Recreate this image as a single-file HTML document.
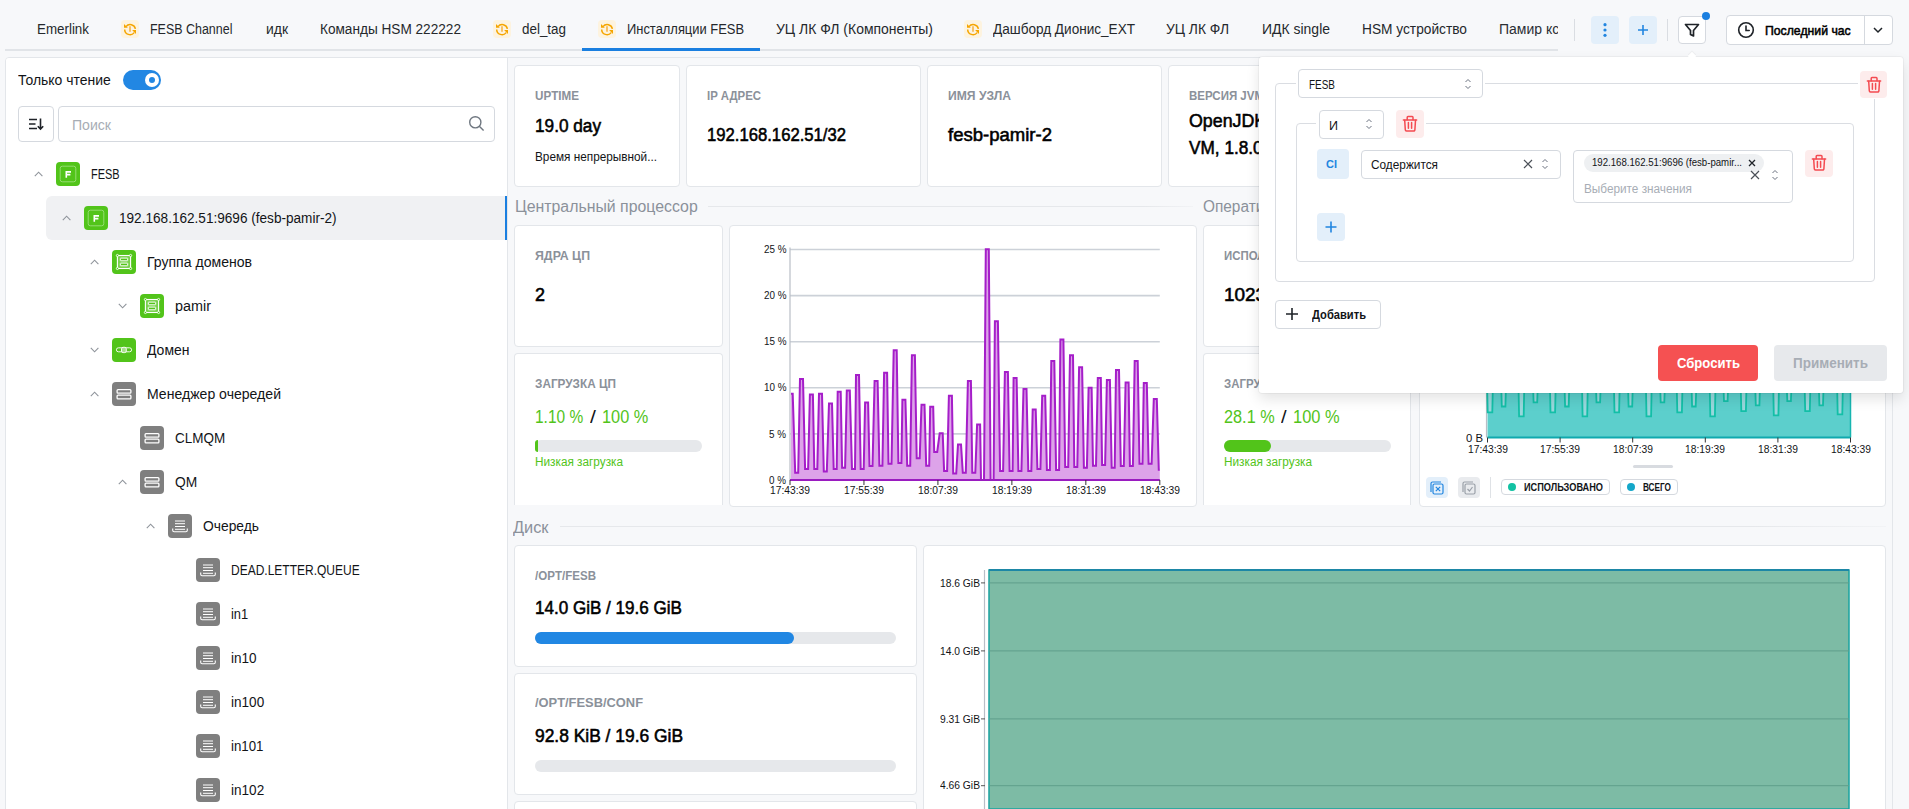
<!DOCTYPE html>
<html><head><meta charset="utf-8"><title>FESB</title>
<style>
html,body{margin:0;padding:0;}
body{width:1909px;height:809px;overflow:hidden;position:relative;background:#f7f8fa;font-family:'Liberation Sans', sans-serif;}
</style></head><body>
<div style="position:absolute;left:5px;top:49px;width:1553px;height:2px;background:#e1e4e8"></div>
<div style="position:absolute;left:582px;top:48px;width:178px;height:3px;background:#1a7fe0"></div>
<div style="position:absolute;left:37.0px;top:22.25px;font-size:14px;line-height:14px;font-weight:400;color:#25282c;white-space:nowrap;transform:scaleX(0.9547);transform-origin:0 0;">Emerlink</div>
<div style="position:absolute;left:150.0px;top:22.25px;font-size:14px;line-height:14px;font-weight:400;color:#25282c;white-space:nowrap;transform:scaleX(0.8898);transform-origin:0 0;">FESB Channel</div>
<div style="position:absolute;left:121px;top:20px;width:18px;height:18px;background:#fdf3df;border-radius:4px"></div>
<svg style="position:absolute;left:121px;top:20px" width="18" height="18" viewBox="0 0 18 18"><g fill="none" stroke="#f5a500" stroke-width="1.5"><path d="M5 6.6 A5.3 5.3 0 0 1 14.4 8.8"/><path d="M3.7 9.4 A5.3 5.3 0 0 0 13.2 12.6"/></g><path d="M3 3.9 L3 7.7 L6.8 7.7 Z" fill="#f5a500"/><path d="M15 14 L15 10.1 L11.1 10.1 Z" fill="#f5a500"/><path d="M9 6.3V11.8" stroke="#f7b13a" stroke-width="1.5"/></svg>
<div style="position:absolute;left:265.5px;top:22.25px;font-size:14px;line-height:14px;font-weight:400;color:#25282c;white-space:nowrap;transform:scaleX(0.9944);transform-origin:0 0;">идк</div>
<div style="position:absolute;left:320.0px;top:22.25px;font-size:14px;line-height:14px;font-weight:400;color:#25282c;white-space:nowrap;transform:scaleX(0.9729);transform-origin:0 0;">Команды HSM 222222</div>
<div style="position:absolute;left:522.0px;top:22.25px;font-size:14px;line-height:14px;font-weight:400;color:#25282c;white-space:nowrap;transform:scaleX(0.9578);transform-origin:0 0;">del_tag</div>
<div style="position:absolute;left:493px;top:20px;width:18px;height:18px;background:#fdf3df;border-radius:4px"></div>
<svg style="position:absolute;left:493px;top:20px" width="18" height="18" viewBox="0 0 18 18"><g fill="none" stroke="#f5a500" stroke-width="1.5"><path d="M5 6.6 A5.3 5.3 0 0 1 14.4 8.8"/><path d="M3.7 9.4 A5.3 5.3 0 0 0 13.2 12.6"/></g><path d="M3 3.9 L3 7.7 L6.8 7.7 Z" fill="#f5a500"/><path d="M15 14 L15 10.1 L11.1 10.1 Z" fill="#f5a500"/><path d="M9 6.3V11.8" stroke="#f7b13a" stroke-width="1.5"/></svg>
<div style="position:absolute;left:627.0px;top:22.25px;font-size:14px;line-height:14px;font-weight:400;color:#25282c;white-space:nowrap;transform:scaleX(0.9222);transform-origin:0 0;">Инсталляции FESB</div>
<div style="position:absolute;left:598px;top:20px;width:18px;height:18px;background:#fdf3df;border-radius:4px"></div>
<svg style="position:absolute;left:598px;top:20px" width="18" height="18" viewBox="0 0 18 18"><g fill="none" stroke="#f5a500" stroke-width="1.5"><path d="M5 6.6 A5.3 5.3 0 0 1 14.4 8.8"/><path d="M3.7 9.4 A5.3 5.3 0 0 0 13.2 12.6"/></g><path d="M3 3.9 L3 7.7 L6.8 7.7 Z" fill="#f5a500"/><path d="M15 14 L15 10.1 L11.1 10.1 Z" fill="#f5a500"/><path d="M9 6.3V11.8" stroke="#f7b13a" stroke-width="1.5"/></svg>
<div style="position:absolute;left:776.0px;top:22.25px;font-size:14px;line-height:14px;font-weight:400;color:#25282c;white-space:nowrap;transform:scaleX(0.9961);transform-origin:0 0;">УЦ ЛК ФЛ (Компоненты)</div>
<div style="position:absolute;left:993.0px;top:22.25px;font-size:14px;line-height:14px;font-weight:400;color:#25282c;white-space:nowrap;transform:scaleX(0.9694);transform-origin:0 0;">Дашборд Дионис_EXT</div>
<div style="position:absolute;left:964px;top:20px;width:18px;height:18px;background:#fdf3df;border-radius:4px"></div>
<svg style="position:absolute;left:964px;top:20px" width="18" height="18" viewBox="0 0 18 18"><g fill="none" stroke="#f5a500" stroke-width="1.5"><path d="M5 6.6 A5.3 5.3 0 0 1 14.4 8.8"/><path d="M3.7 9.4 A5.3 5.3 0 0 0 13.2 12.6"/></g><path d="M3 3.9 L3 7.7 L6.8 7.7 Z" fill="#f5a500"/><path d="M15 14 L15 10.1 L11.1 10.1 Z" fill="#f5a500"/><path d="M9 6.3V11.8" stroke="#f7b13a" stroke-width="1.5"/></svg>
<div style="position:absolute;left:1166.0px;top:22.25px;font-size:14px;line-height:14px;font-weight:400;color:#25282c;white-space:nowrap;transform:scaleX(0.9882);transform-origin:0 0;">УЦ ЛК ФЛ</div>
<div style="position:absolute;left:1262.0px;top:22.25px;font-size:14px;line-height:14px;font-weight:400;color:#25282c;white-space:nowrap;transform:scaleX(0.9975);transform-origin:0 0;">ИДК single</div>
<div style="position:absolute;left:1362.0px;top:22.25px;font-size:14px;line-height:14px;font-weight:400;color:#25282c;white-space:nowrap;transform:scaleX(0.9800);transform-origin:0 0;">HSM устройство</div>
<div style="position:absolute;left:1499.0px;top:22.25px;font-size:14px;line-height:14px;font-weight:400;color:#2b2f35;white-space:nowrap;width:59px;overflow:hidden;">Памир кс</div>
<div style="position:absolute;left:1574px;top:19px;width:1px;height:22px;background:#dadde2"></div>
<div style="position:absolute;left:1667px;top:19px;width:1px;height:22px;background:#dadde2"></div>
<div style="position:absolute;left:1591px;top:16px;width:28px;height:28px;background:#e3effa;border-radius:4px"></div>
<svg style="position:absolute;left:1591px;top:16px" width="28" height="28"><g fill="#2185e0"><circle cx="14" cy="8.65" r="1.6"/><circle cx="14" cy="14" r="1.6"/><circle cx="14" cy="19.35" r="1.6"/></g></svg>
<div style="position:absolute;left:1629px;top:16px;width:28px;height:28px;background:#e3effa;border-radius:4px"></div>
<svg style="position:absolute;left:1629px;top:16px" width="28" height="28"><g stroke="#2185e0" stroke-width="1.6"><path d="M14 9V19M9 14H19"/></g></svg>
<div style="position:absolute;left:1678px;top:16px;width:28px;height:28px;box-sizing:border-box;background:#fff;border:1px solid #d5d9df;border-radius:4px"></div>
<svg style="position:absolute;left:1678px;top:16px" width="28" height="28"><path d="M7.5 8.5H20.5L15.5 14.5V20L12.5 18.5V14.5Z" fill="none" stroke="#1f2328" stroke-width="1.7" stroke-linejoin="round"/></svg>
<div style="position:absolute;left:1701.9px;top:11.9px;width:8.2px;height:8.2px;border-radius:50%;background:#1a7fe0"></div>
<div style="position:absolute;left:1726px;top:15px;width:167px;height:30px;box-sizing:border-box;background:#fff;border:1px solid #d5d9df;border-radius:4px"></div>
<div style="position:absolute;left:1864px;top:16px;width:1px;height:28px;background:#d5d9df"></div>
<svg style="position:absolute;left:1736px;top:20px" width="20" height="20"><circle cx="10" cy="10" r="7.3" fill="none" stroke="#1f2328" stroke-width="1.6"/><path d="M10 6V10.5H13.2" fill="none" stroke="#1f2328" stroke-width="1.6" stroke-linecap="round"/></svg>
<div style="position:absolute;left:1764.6px;top:23.77px;font-size:13.5px;line-height:13.5px;font-weight:400;-webkit-text-stroke:0.55px #000;color:#000;white-space:nowrap;transform:scaleX(0.9067);transform-origin:0 0;">Последний час</div>
<svg style="position:absolute;left:1870px;top:22px" width="16" height="16"><path d="M4 6L8 10L12 6" fill="none" stroke="#1f2328" stroke-width="1.5"/></svg>
<div style="position:absolute;left:5px;top:57px;width:1888px;height:760px;box-sizing:border-box;background:#f7f8fa;border:1px solid #e3e6ea;border-radius:4px 4px 0 0"></div>
<div style="position:absolute;left:6px;top:58px;width:501px;height:760px;background:#fff;border-radius:3px 0 0 0"></div>
<div style="position:absolute;left:507px;top:58px;width:1px;height:760px;background:#e3e6ea"></div>
<div style="position:absolute;left:18.3px;top:73.15px;font-size:14px;line-height:14px;font-weight:400;color:#121417;white-space:nowrap;transform:scaleX(0.9964);transform-origin:0 0;">Только чтение</div>
<div style="position:absolute;left:123px;top:70px;width:38px;height:20px;background:#2287e3;border-radius:10px"></div>
<div style="position:absolute;left:145px;top:72.7px;width:14px;height:14px;border-radius:50%;background:#fff"></div>
<div style="position:absolute;left:149px;top:76.7px;width:6px;height:6px;border-radius:50%;background:#2287e3"></div>
<div style="position:absolute;left:18px;top:106px;width:36px;height:36px;box-sizing:border-box;border:1px solid #d5d9df;border-radius:4px;background:#fff"></div>
<svg style="position:absolute;left:18px;top:106px" width="36" height="36"><g stroke="#1f2328" stroke-width="1.6" fill="none"><path d="M11 13.5H19M11 18H17.5M11 22.5H19"/><path d="M22.5 12.5V23M19.8 20.2L22.5 23L25.2 20.2"/></g></svg>
<div style="position:absolute;left:58px;top:106px;width:437px;height:36px;box-sizing:border-box;border:1px solid #d5d9df;border-radius:4px;background:#fff"></div>
<div style="position:absolute;left:72.0px;top:117.95px;font-size:14px;line-height:14px;font-weight:400;color:#a7adb5;white-space:nowrap;transform:scaleX(1.0052);transform-origin:0 0;">Поиск</div>
<svg style="position:absolute;left:466px;top:114px" width="20" height="20"><circle cx="9.3" cy="8.3" r="5.6" fill="none" stroke="#6f7780" stroke-width="1.4"/><path d="M13.3 12.3L17.6 16.6" stroke="#6f7780" stroke-width="1.4"/></svg>
<div style="position:absolute;left:46px;top:196px;width:459px;height:44px;background:#f0f1f3;border-radius:6px 0 0 6px"></div>
<div style="position:absolute;left:505px;top:196px;width:2px;height:44px;background:#1a7fe0"></div>
<svg style="position:absolute;left:34px;top:171px" width="10" height="6"><path d="M0.8 5.2L4.6 1.2L8.4 5.2" fill="none" stroke="#8f949b" stroke-width="1.1"/></svg>
<div style="position:absolute;left:56px;top:162px;width:24px;height:24px;background:#52c41a;border-radius:4px"></div><svg style="position:absolute;left:56px;top:162px" width="24" height="24"><rect x="4.2" y="4.2" width="15.6" height="15.6" rx="2.2" fill="none" stroke="#a5e287" stroke-width="0.8"/><path d="M10.3 9.1V15.8M9.5 9.9H15M9.5 12.6H14.4" stroke="#fff" stroke-width="1.6" fill="none"/></svg>
<div style="position:absolute;left:90.5px;top:167.15px;font-size:14px;line-height:14px;font-weight:400;color:#121417;white-space:nowrap;transform:scaleX(0.7819);transform-origin:0 0;">FESB</div>
<svg style="position:absolute;left:62px;top:215px" width="10" height="6"><path d="M0.8 5.2L4.6 1.2L8.4 5.2" fill="none" stroke="#8f949b" stroke-width="1.1"/></svg>
<div style="position:absolute;left:84px;top:206px;width:24px;height:24px;background:#52c41a;border-radius:4px"></div><svg style="position:absolute;left:84px;top:206px" width="24" height="24"><rect x="4.2" y="4.2" width="15.6" height="15.6" rx="2.2" fill="none" stroke="#a5e287" stroke-width="0.8"/><path d="M10.3 9.1V15.8M9.5 9.9H15M9.5 12.6H14.4" stroke="#fff" stroke-width="1.6" fill="none"/></svg>
<div style="position:absolute;left:118.5px;top:211.15px;font-size:14px;line-height:14px;font-weight:400;color:#121417;white-space:nowrap;transform:scaleX(0.9708);transform-origin:0 0;">192.168.162.51:9696 (fesb-pamir-2)</div>
<svg style="position:absolute;left:90px;top:259px" width="10" height="6"><path d="M0.8 5.2L4.6 1.2L8.4 5.2" fill="none" stroke="#8f949b" stroke-width="1.1"/></svg>
<div style="position:absolute;left:112px;top:250px;width:24px;height:24px;background:#52c41a;border-radius:4px"></div><svg style="position:absolute;left:112px;top:250px" width="24" height="24"><rect x="5.4" y="5.5" width="13.2" height="13" fill="rgba(255,255,255,0.22)" stroke="#fff" stroke-width="1.1"/><rect x="8.3" y="8.1" width="7.4" height="2.7" rx="0.4" fill="#52c41a" stroke="#fff" stroke-width="1"/><rect x="8.3" y="13.1" width="7.4" height="2.7" rx="0.4" fill="#52c41a" stroke="#fff" stroke-width="1"/><g fill="#52c41a" stroke="#fff" stroke-width="0.8"><circle cx="5.4" cy="5.5" r="1.1"/><circle cx="18.6" cy="5.5" r="1.1"/><circle cx="5.4" cy="18.5" r="1.1"/><circle cx="18.6" cy="18.5" r="1.1"/></g></svg>
<div style="position:absolute;left:146.5px;top:255.15px;font-size:14px;line-height:14px;font-weight:400;color:#121417;white-space:nowrap;transform:scaleX(1.0039);transform-origin:0 0;">Группа доменов</div>
<svg style="position:absolute;left:118px;top:303px" width="10" height="6"><path d="M0.8 0.8L4.6 4.8L8.4 0.8" fill="none" stroke="#8f949b" stroke-width="1.1"/></svg>
<div style="position:absolute;left:140px;top:294px;width:24px;height:24px;background:#52c41a;border-radius:4px"></div><svg style="position:absolute;left:140px;top:294px" width="24" height="24"><rect x="5.4" y="5.5" width="13.2" height="13" fill="rgba(255,255,255,0.22)" stroke="#fff" stroke-width="1.1"/><rect x="8.3" y="8.1" width="7.4" height="2.7" rx="0.4" fill="#52c41a" stroke="#fff" stroke-width="1"/><rect x="8.3" y="13.1" width="7.4" height="2.7" rx="0.4" fill="#52c41a" stroke="#fff" stroke-width="1"/><g fill="#52c41a" stroke="#fff" stroke-width="0.8"><circle cx="5.4" cy="5.5" r="1.1"/><circle cx="18.6" cy="5.5" r="1.1"/><circle cx="5.4" cy="18.5" r="1.1"/><circle cx="18.6" cy="18.5" r="1.1"/></g></svg>
<div style="position:absolute;left:174.5px;top:299.15px;font-size:14px;line-height:14px;font-weight:400;color:#121417;white-space:nowrap;transform:scaleX(1.0281);transform-origin:0 0;">pamir</div>
<svg style="position:absolute;left:90px;top:347px" width="10" height="6"><path d="M0.8 0.8L4.6 4.8L8.4 0.8" fill="none" stroke="#8f949b" stroke-width="1.1"/></svg>
<div style="position:absolute;left:112px;top:338px;width:24px;height:24px;background:#52c41a;border-radius:4px"></div><svg style="position:absolute;left:112px;top:338px" width="24" height="24"><g fill="none" stroke="#fff" stroke-width="0.9"><rect x="4.4" y="9.8" width="15.2" height="4" rx="2"/></g><rect x="9.5" y="9.3" width="4.8" height="5.3" rx="1.6" fill="#a9e08c" stroke="#fff" stroke-width="0.9"/></svg>
<div style="position:absolute;left:146.5px;top:343.15px;font-size:14px;line-height:14px;font-weight:400;color:#121417;white-space:nowrap;transform:scaleX(0.9982);transform-origin:0 0;">Домен</div>
<svg style="position:absolute;left:90px;top:391px" width="10" height="6"><path d="M0.8 5.2L4.6 1.2L8.4 5.2" fill="none" stroke="#8f949b" stroke-width="1.1"/></svg>
<div style="position:absolute;left:112px;top:382px;width:24px;height:24px;background:#7f7f7f;border-radius:4px"></div><svg style="position:absolute;left:112px;top:382px" width="24" height="24"><g fill="none" stroke="#fff" stroke-width="1.3"><rect x="5.1" y="7.6" width="13.8" height="3.6" rx="0.9"/><rect x="5.1" y="13.2" width="13.8" height="3.6" rx="0.9"/></g><path d="M6 12.2H18" stroke="#c4c4c4" stroke-width="0.9"/></svg>
<div style="position:absolute;left:146.5px;top:387.15px;font-size:14px;line-height:14px;font-weight:400;color:#121417;white-space:nowrap;transform:scaleX(1.0043);transform-origin:0 0;">Менеджер очередей</div>
<div style="position:absolute;left:140px;top:426px;width:24px;height:24px;background:#7f7f7f;border-radius:4px"></div><svg style="position:absolute;left:140px;top:426px" width="24" height="24"><g fill="none" stroke="#fff" stroke-width="1.3"><rect x="5.1" y="7.6" width="13.8" height="3.6" rx="0.9"/><rect x="5.1" y="13.2" width="13.8" height="3.6" rx="0.9"/></g><path d="M6 12.2H18" stroke="#c4c4c4" stroke-width="0.9"/></svg>
<div style="position:absolute;left:174.5px;top:431.15px;font-size:14px;line-height:14px;font-weight:400;color:#121417;white-space:nowrap;transform:scaleX(0.9631);transform-origin:0 0;">CLMQM</div>
<svg style="position:absolute;left:118px;top:479px" width="10" height="6"><path d="M0.8 5.2L4.6 1.2L8.4 5.2" fill="none" stroke="#8f949b" stroke-width="1.1"/></svg>
<div style="position:absolute;left:140px;top:470px;width:24px;height:24px;background:#7f7f7f;border-radius:4px"></div><svg style="position:absolute;left:140px;top:470px" width="24" height="24"><g fill="none" stroke="#fff" stroke-width="1.3"><rect x="5.1" y="7.6" width="13.8" height="3.6" rx="0.9"/><rect x="5.1" y="13.2" width="13.8" height="3.6" rx="0.9"/></g><path d="M6 12.2H18" stroke="#c4c4c4" stroke-width="0.9"/></svg>
<div style="position:absolute;left:174.5px;top:475.15px;font-size:14px;line-height:14px;font-weight:400;color:#121417;white-space:nowrap;transform:scaleX(0.9839);transform-origin:0 0;">QM</div>
<svg style="position:absolute;left:146px;top:523px" width="10" height="6"><path d="M0.8 5.2L4.6 1.2L8.4 5.2" fill="none" stroke="#8f949b" stroke-width="1.1"/></svg>
<div style="position:absolute;left:168px;top:514px;width:24px;height:24px;background:#7f7f7f;border-radius:4px"></div><svg style="position:absolute;left:168px;top:514px" width="24" height="24"><g fill="none" stroke="#fff" stroke-width="1"><path d="M7 7H17M7 9.7H17M7 12.5H17M7 15.3H17" /><path d="M4.7 14.6V16.3A1.4 1.4 0 0 0 6.1 17.7H17.9A1.4 1.4 0 0 0 19.3 16.3V14.6" stroke-width="1.1"/></g></svg>
<div style="position:absolute;left:202.5px;top:519.15px;font-size:14px;line-height:14px;font-weight:400;color:#121417;white-space:nowrap;transform:scaleX(0.9876);transform-origin:0 0;">Очередь</div>
<div style="position:absolute;left:196px;top:558px;width:24px;height:24px;background:#7f7f7f;border-radius:4px"></div><svg style="position:absolute;left:196px;top:558px" width="24" height="24"><g fill="none" stroke="#fff" stroke-width="1"><path d="M7 7H17M7 9.7H17M7 12.5H17M7 15.3H17" /><path d="M4.7 14.6V16.3A1.4 1.4 0 0 0 6.1 17.7H17.9A1.4 1.4 0 0 0 19.3 16.3V14.6" stroke-width="1.1"/></g></svg>
<div style="position:absolute;left:230.5px;top:563.15px;font-size:14px;line-height:14px;font-weight:400;color:#121417;white-space:nowrap;transform:scaleX(0.8572);transform-origin:0 0;">DEAD.LETTER.QUEUE</div>
<div style="position:absolute;left:196px;top:602px;width:24px;height:24px;background:#7f7f7f;border-radius:4px"></div><svg style="position:absolute;left:196px;top:602px" width="24" height="24"><g fill="none" stroke="#fff" stroke-width="1"><path d="M7 7H17M7 9.7H17M7 12.5H17M7 15.3H17" /><path d="M4.7 14.6V16.3A1.4 1.4 0 0 0 6.1 17.7H17.9A1.4 1.4 0 0 0 19.3 16.3V14.6" stroke-width="1.1"/></g></svg>
<div style="position:absolute;left:230.5px;top:607.15px;font-size:14px;line-height:14px;font-weight:400;color:#121417;white-space:nowrap;transform:scaleX(0.9204);transform-origin:0 0;">in1</div>
<div style="position:absolute;left:196px;top:646px;width:24px;height:24px;background:#7f7f7f;border-radius:4px"></div><svg style="position:absolute;left:196px;top:646px" width="24" height="24"><g fill="none" stroke="#fff" stroke-width="1"><path d="M7 7H17M7 9.7H17M7 12.5H17M7 15.3H17" /><path d="M4.7 14.6V16.3A1.4 1.4 0 0 0 6.1 17.7H17.9A1.4 1.4 0 0 0 19.3 16.3V14.6" stroke-width="1.1"/></g></svg>
<div style="position:absolute;left:230.5px;top:651.15px;font-size:14px;line-height:14px;font-weight:400;color:#121417;white-space:nowrap;transform:scaleX(0.9672);transform-origin:0 0;">in10</div>
<div style="position:absolute;left:196px;top:690px;width:24px;height:24px;background:#7f7f7f;border-radius:4px"></div><svg style="position:absolute;left:196px;top:690px" width="24" height="24"><g fill="none" stroke="#fff" stroke-width="1"><path d="M7 7H17M7 9.7H17M7 12.5H17M7 15.3H17" /><path d="M4.7 14.6V16.3A1.4 1.4 0 0 0 6.1 17.7H17.9A1.4 1.4 0 0 0 19.3 16.3V14.6" stroke-width="1.1"/></g></svg>
<div style="position:absolute;left:230.5px;top:695.15px;font-size:14px;line-height:14px;font-weight:400;color:#121417;white-space:nowrap;transform:scaleX(0.9689);transform-origin:0 0;">in100</div>
<div style="position:absolute;left:196px;top:734px;width:24px;height:24px;background:#7f7f7f;border-radius:4px"></div><svg style="position:absolute;left:196px;top:734px" width="24" height="24"><g fill="none" stroke="#fff" stroke-width="1"><path d="M7 7H17M7 9.7H17M7 12.5H17M7 15.3H17" /><path d="M4.7 14.6V16.3A1.4 1.4 0 0 0 6.1 17.7H17.9A1.4 1.4 0 0 0 19.3 16.3V14.6" stroke-width="1.1"/></g></svg>
<div style="position:absolute;left:230.5px;top:739.15px;font-size:14px;line-height:14px;font-weight:400;color:#121417;white-space:nowrap;transform:scaleX(0.9485);transform-origin:0 0;">in101</div>
<div style="position:absolute;left:196px;top:778px;width:24px;height:24px;background:#7f7f7f;border-radius:4px"></div><svg style="position:absolute;left:196px;top:778px" width="24" height="24"><g fill="none" stroke="#fff" stroke-width="1"><path d="M7 7H17M7 9.7H17M7 12.5H17M7 15.3H17" /><path d="M4.7 14.6V16.3A1.4 1.4 0 0 0 6.1 17.7H17.9A1.4 1.4 0 0 0 19.3 16.3V14.6" stroke-width="1.1"/></g></svg>
<div style="position:absolute;left:230.5px;top:783.15px;font-size:14px;line-height:14px;font-weight:400;color:#121417;white-space:nowrap;transform:scaleX(0.9689);transform-origin:0 0;">in102</div>
<div style="position:absolute;left:514px;top:65px;width:166px;height:122px;box-sizing:border-box;background:#fff;border:1px solid #e3e6ea;border-radius:4px;"></div>
<div style="position:absolute;left:535.0px;top:90.04px;font-size:12px;line-height:12px;font-weight:700;color:#8b919a;white-space:nowrap;transform:scaleX(0.9704);transform-origin:0 0;">UPTIME</div>
<div style="position:absolute;left:535.0px;top:116.66px;font-size:18px;line-height:18px;font-weight:400;-webkit-text-stroke:0.55px #000;color:#000;white-space:nowrap;transform:scaleX(0.9557);transform-origin:0 0;">19.0 day</div>
<div style="position:absolute;left:535.0px;top:151.14px;font-size:12px;line-height:12px;font-weight:400;color:#121417;white-space:nowrap;transform:scaleX(0.9818);transform-origin:0 0;">Время непрерывной...</div>
<div style="position:absolute;left:686px;top:65px;width:235px;height:122px;box-sizing:border-box;background:#fff;border:1px solid #e3e6ea;border-radius:4px;"></div>
<div style="position:absolute;left:707.0px;top:90.04px;font-size:12px;line-height:12px;font-weight:700;color:#8b919a;white-space:nowrap;transform:scaleX(0.9508);transform-origin:0 0;">IP АДРЕС</div>
<div style="position:absolute;left:707.0px;top:125.56px;font-size:18px;line-height:18px;font-weight:400;-webkit-text-stroke:0.55px #000;color:#000;white-space:nowrap;transform:scaleX(0.9257);transform-origin:0 0;">192.168.162.51/32</div>
<div style="position:absolute;left:927px;top:65px;width:235px;height:122px;box-sizing:border-box;background:#fff;border:1px solid #e3e6ea;border-radius:4px;"></div>
<div style="position:absolute;left:948.0px;top:90.04px;font-size:12px;line-height:12px;font-weight:700;color:#8b919a;white-space:nowrap;transform:scaleX(1.0103);transform-origin:0 0;">ИМЯ УЗЛА</div>
<div style="position:absolute;left:948.0px;top:125.56px;font-size:18px;line-height:18px;font-weight:400;-webkit-text-stroke:0.55px #000;color:#000;white-space:nowrap;transform:scaleX(1.0294);transform-origin:0 0;">fesb-pamir-2</div>
<div style="position:absolute;left:1168px;top:65px;width:235px;height:122px;box-sizing:border-box;background:#fff;border:1px solid #e3e6ea;border-radius:4px;"></div>
<div style="position:absolute;left:1189.4px;top:90.04px;font-size:12px;line-height:12px;font-weight:700;color:#8b919a;white-space:nowrap;transform:scaleX(0.9577);transform-origin:0 0;">ВЕРСИЯ JVM</div>
<div style="position:absolute;left:1189.4px;top:111.56px;font-size:18px;line-height:18px;font-weight:400;-webkit-text-stroke:0.55px #000;color:#000;white-space:nowrap;transform:scaleX(0.9890);transform-origin:0 0;">OpenJDK 64-Bit Server</div>
<div style="position:absolute;left:1189.4px;top:139.26px;font-size:18px;line-height:18px;font-weight:400;-webkit-text-stroke:0.55px #000;color:#000;white-space:nowrap;transform:scaleX(0.9565);transform-origin:0 0;">VM, 1.8.0_282</div>
<div style="position:absolute;left:514.6px;top:199.16px;font-size:16px;line-height:16px;font-weight:400;color:#8b919a;white-space:nowrap;transform:scaleX(0.9907);transform-origin:0 0;">Центральный процессор</div>
<div style="position:absolute;left:708px;top:206px;width:485px;height:1px;background:linear-gradient(90deg,#e6e8eb,#e6e8eb 90%,rgba(230,232,235,0.3))"></div>
<div style="position:absolute;left:1203.3px;top:199.16px;font-size:16px;line-height:16px;font-weight:400;color:#8b919a;white-space:nowrap;transform:scaleX(0.9618);transform-origin:0 0;">Оперативная память</div>
<div style="position:absolute;left:1365px;top:206px;width:521px;height:1px;background:linear-gradient(90deg,#e6e8eb,#e6e8eb 90%,rgba(230,232,235,0.3))"></div>
<div style="position:absolute;left:513.4px;top:519.66px;font-size:16px;line-height:16px;font-weight:400;color:#8b919a;white-space:nowrap;transform:scaleX(1.0207);transform-origin:0 0;">Диск</div>
<div style="position:absolute;left:560px;top:526px;width:1326px;height:1px;background:linear-gradient(90deg,#e6e8eb,#e6e8eb 90%,rgba(230,232,235,0.3))"></div>
<div style="position:absolute;left:514px;top:225px;width:209px;height:122px;box-sizing:border-box;background:#fff;border:1px solid #e3e6ea;border-radius:4px;"></div>
<div style="position:absolute;left:535.0px;top:249.84px;font-size:12px;line-height:12px;font-weight:700;color:#8b919a;white-space:nowrap;transform:scaleX(1.0277);transform-origin:0 0;">ЯДРА ЦП</div>
<div style="position:absolute;left:535.0px;top:285.56px;font-size:18px;line-height:18px;font-weight:400;-webkit-text-stroke:0.55px #000;color:#000;white-space:nowrap;transform:scaleX(0.9984);transform-origin:0 0;">2</div>
<div style="position:absolute;left:514px;top:353px;width:209px;height:152px;box-sizing:border-box;background:#fff;border:1px solid #e3e6ea;border-radius:4px;border-bottom:none;border-radius:4px 4px 0 0"></div>
<div style="position:absolute;left:535.0px;top:377.84px;font-size:12px;line-height:12px;font-weight:700;color:#8b919a;white-space:nowrap;transform:scaleX(0.9814);transform-origin:0 0;">ЗАГРУЗКА ЦП</div>
<div style="position:absolute;left:534.8px;top:407.96px;font-size:18px;line-height:18px;font-weight:400;color:#52c41a;white-space:nowrap;transform:scaleX(0.8600);transform-origin:0 0;">1.10 %</div>
<div style="position:absolute;left:589.8px;top:407.96px;font-size:18px;line-height:18px;font-weight:400;color:#121417;white-space:nowrap;transform:scaleX(1.1763);transform-origin:0 0;">/</div>
<div style="position:absolute;left:602.0px;top:407.96px;font-size:18px;line-height:18px;font-weight:400;color:#52c41a;white-space:nowrap;transform:scaleX(0.9070);transform-origin:0 0;">100 %</div>
<div style="position:absolute;left:535px;top:440px;width:167px;height:11.5px;background:#e6e8eb;border-radius:6px"></div>
<div style="position:absolute;left:535px;top:440px;width:3px;height:11.5px;background:#52c41a;border-radius:6px 0 0 6px"></div>
<div style="position:absolute;left:535.0px;top:456.44px;font-size:12px;line-height:12px;font-weight:400;color:#52c41a;white-space:nowrap;transform:scaleX(0.9814);transform-origin:0 0;">Низкая загрузка</div>
<div style="position:absolute;left:729px;top:225px;width:468px;height:282px;box-sizing:border-box;background:#fff;border:1px solid #e3e6ea;border-radius:4px;"></div>
<div style="position:absolute;left:1203px;top:225px;width:208px;height:122px;box-sizing:border-box;background:#fff;border:1px solid #e3e6ea;border-radius:4px;"></div>
<div style="position:absolute;left:1224.0px;top:249.84px;font-size:12px;line-height:12px;font-weight:700;color:#8b919a;white-space:nowrap;transform:scaleX(0.9503);transform-origin:0 0;">ИСПОЛЬЗОВАНО</div>
<div style="position:absolute;left:1224.0px;top:285.76px;font-size:18px;line-height:18px;font-weight:400;-webkit-text-stroke:0.55px #000;color:#000;white-space:nowrap;transform:scaleX(1.0520);transform-origin:0 0;">1023 MiB</div>
<div style="position:absolute;left:1203px;top:353px;width:208px;height:152px;box-sizing:border-box;background:#fff;border:1px solid #e3e6ea;border-radius:4px;border-bottom:none;border-radius:4px 4px 0 0"></div>
<div style="position:absolute;left:1224.0px;top:377.84px;font-size:12px;line-height:12px;font-weight:700;color:#8b919a;white-space:nowrap;transform:scaleX(0.9551);transform-origin:0 0;">ЗАГРУЗКА ОЗУ</div>
<div style="position:absolute;left:1224.0px;top:407.76px;font-size:18px;line-height:18px;font-weight:400;color:#52c41a;white-space:nowrap;transform:scaleX(0.9046);transform-origin:0 0;">28.1 %</div>
<div style="position:absolute;left:1281.0px;top:407.76px;font-size:18px;line-height:18px;font-weight:400;color:#121417;white-space:nowrap;transform:scaleX(1.1165);transform-origin:0 0;">/</div>
<div style="position:absolute;left:1293.4px;top:407.76px;font-size:18px;line-height:18px;font-weight:400;color:#52c41a;white-space:nowrap;transform:scaleX(0.9129);transform-origin:0 0;">100 %</div>
<div style="position:absolute;left:1224px;top:440px;width:167px;height:11.5px;background:#e6e8eb;border-radius:6px"></div>
<div style="position:absolute;left:1224px;top:440px;width:47px;height:11.5px;background:#52c41a;border-radius:6px"></div>
<div style="position:absolute;left:1224.0px;top:456.44px;font-size:12px;line-height:12px;font-weight:400;color:#52c41a;white-space:nowrap;transform:scaleX(0.9814);transform-origin:0 0;">Низкая загрузка</div>
<div style="position:absolute;left:1419px;top:225px;width:467px;height:282px;box-sizing:border-box;background:#fff;border:1px solid #e3e6ea;border-radius:4px;"></div>
<div style="position:absolute;left:514px;top:545px;width:403px;height:122px;box-sizing:border-box;background:#fff;border:1px solid #e3e6ea;border-radius:4px;"></div>
<div style="position:absolute;left:535.0px;top:570.04px;font-size:12px;line-height:12px;font-weight:700;color:#8b919a;white-space:nowrap;transform:scaleX(0.9630);transform-origin:0 0;">/OPT/FESB</div>
<div style="position:absolute;left:535.0px;top:599.36px;font-size:18px;line-height:18px;font-weight:400;-webkit-text-stroke:0.55px #000;color:#000;white-space:nowrap;transform:scaleX(0.9478);transform-origin:0 0;">14.0 GiB / 19.6 GiB</div>
<div style="position:absolute;left:535px;top:632px;width:361px;height:12px;background:#e6e8eb;border-radius:6px"></div>
<div style="position:absolute;left:535px;top:632px;width:258.5px;height:12px;background:#2187e3;border-radius:6px"></div>
<div style="position:absolute;left:514px;top:673px;width:403px;height:122px;box-sizing:border-box;background:#fff;border:1px solid #e3e6ea;border-radius:4px;"></div>
<div style="position:absolute;left:535.0px;top:696.84px;font-size:12px;line-height:12px;font-weight:700;color:#8b919a;white-space:nowrap;transform:scaleX(1.0728);transform-origin:0 0;">/OPT/FESB/CONF</div>
<div style="position:absolute;left:535.0px;top:727.26px;font-size:18px;line-height:18px;font-weight:400;-webkit-text-stroke:0.55px #000;color:#000;white-space:nowrap;transform:scaleX(0.9667);transform-origin:0 0;">92.8 KiB / 19.6 GiB</div>
<div style="position:absolute;left:535px;top:760px;width:361px;height:12px;background:#e6e8eb;border-radius:6px"></div>
<div style="position:absolute;left:514px;top:801px;width:403px;height:122px;box-sizing:border-box;background:#fff;border:1px solid #e3e6ea;border-radius:4px;"></div>
<div style="position:absolute;left:923px;top:545px;width:963px;height:300px;box-sizing:border-box;background:#fff;border:1px solid #e3e6ea;border-radius:4px;"></div>
<svg style="position:absolute;left:0;top:0" width="1909" height="809"><line x1="790" y1="249.5" x2="1159.8" y2="249.5" stroke="#ccd1d8" stroke-width="1.6"/><line x1="790" y1="295.6" x2="1159.8" y2="295.6" stroke="#ccd1d8" stroke-width="1.6"/><line x1="790" y1="341.7" x2="1159.8" y2="341.7" stroke="#ccd1d8" stroke-width="1.6"/><line x1="790" y1="387.8" x2="1159.8" y2="387.8" stroke="#ccd1d8" stroke-width="1.6"/><line x1="790" y1="433.9" x2="1159.8" y2="433.9" stroke="#ccd1d8" stroke-width="1.6"/><line x1="790" y1="247.5" x2="790" y2="480" stroke="#b9bec6" stroke-width="1.2"/><polygon points="791,480 791.0,393.7 792.7,393.7 795.2,472.8 798.2,472.8 800.0,379.1 803.0,379.1 805.1,468.9 808.1,468.9 809.9,394.5 812.9,394.5 814.3,468.9 817.3,468.9 819.0,393.7 822.0,393.7 823.8,471.6 826.8,471.6 829.0,403.6 832.0,403.6 833.7,468.9 836.7,468.9 837.7,391.7 840.7,391.7 842.1,467.7 845.1,467.7 846.8,390.6 849.8,390.6 852.0,468.9 855.0,468.9 856.0,375.1 859.0,375.1 860.7,468.9 863.7,468.9 865.1,402.4 868.1,402.4 869.5,466.1 872.5,466.1 874.6,381.1 877.6,381.1 879.4,465.7 882.4,465.7 884.1,372.8 887.1,372.8 888.5,463.7 891.5,463.7 893.7,350.2 896.7,350.2 898.4,462.9 901.4,462.9 902.4,399.7 905.4,399.7 907.2,465.7 910.2,465.7 911.9,355.3 914.9,355.3 916.7,458.2 919.7,458.2 921.5,404.8 924.5,404.8 926.2,465.7 929.2,465.7 930.2,406.8 933.2,406.8 934.2,451.9 937.2,451.9 939.7,433.3 942.7,433.3 944.1,470.9 947.1,470.9 948.9,395.7 951.9,395.7 953.2,473.6 956.2,473.6 958.0,444.4 961.0,444.4 962.8,472.8 965.8,472.8 967.9,381.1 970.9,381.1 972.3,472.8 975.3,472.8 977.1,424.6 980.1,424.6 981.0,480.0 984.0,480.0 985.8,249.3 988.8,249.3 990.6,480.0 993.6,480.0 994.9,321.3 997.9,321.3 1000.1,470.9 1003.1,470.9 1004.9,372.0 1007.9,372.0 1009.6,470.9 1012.6,470.9 1013.6,377.9 1016.6,377.9 1018.4,470.9 1021.4,470.9 1023.5,389.0 1026.5,389.0 1028.3,470.9 1031.3,470.9 1032.7,409.5 1035.7,409.5 1037.4,468.9 1040.4,468.9 1042.2,395.7 1045.2,395.7 1046.9,470.1 1049.9,470.1 1051.3,360.9 1054.3,360.9 1056.1,470.1 1059.1,470.1 1060.4,339.5 1063.4,339.5 1065.2,466.9 1068.2,466.9 1070.0,355.3 1073.0,355.3 1074.3,466.9 1077.3,466.9 1079.1,367.2 1082.1,367.2 1083.9,467.7 1086.9,467.7 1088.6,387.8 1091.6,387.8 1093.0,465.7 1096.0,465.7 1097.8,377.9 1100.8,377.9 1102.1,464.9 1105.1,464.9 1106.9,379.9 1109.9,379.9 1111.7,467.7 1114.7,467.7 1116.0,370.0 1119.0,370.0 1120.8,466.1 1123.8,466.1 1125.6,382.6 1128.6,382.6 1129.9,466.1 1132.9,466.1 1134.7,360.9 1137.7,360.9 1139.5,463.7 1142.5,463.7 1143.8,383.0 1146.8,383.0 1148.6,463.7 1151.6,463.7 1153.8,398.9 1156.8,398.9 1158.8,469.7 1159.8,469.7 1159.8,480" fill="#dda3e9"/><polyline points="791.0,393.7 792.7,393.7 795.2,472.8 798.2,472.8 800.0,379.1 803.0,379.1 805.1,468.9 808.1,468.9 809.9,394.5 812.9,394.5 814.3,468.9 817.3,468.9 819.0,393.7 822.0,393.7 823.8,471.6 826.8,471.6 829.0,403.6 832.0,403.6 833.7,468.9 836.7,468.9 837.7,391.7 840.7,391.7 842.1,467.7 845.1,467.7 846.8,390.6 849.8,390.6 852.0,468.9 855.0,468.9 856.0,375.1 859.0,375.1 860.7,468.9 863.7,468.9 865.1,402.4 868.1,402.4 869.5,466.1 872.5,466.1 874.6,381.1 877.6,381.1 879.4,465.7 882.4,465.7 884.1,372.8 887.1,372.8 888.5,463.7 891.5,463.7 893.7,350.2 896.7,350.2 898.4,462.9 901.4,462.9 902.4,399.7 905.4,399.7 907.2,465.7 910.2,465.7 911.9,355.3 914.9,355.3 916.7,458.2 919.7,458.2 921.5,404.8 924.5,404.8 926.2,465.7 929.2,465.7 930.2,406.8 933.2,406.8 934.2,451.9 937.2,451.9 939.7,433.3 942.7,433.3 944.1,470.9 947.1,470.9 948.9,395.7 951.9,395.7 953.2,473.6 956.2,473.6 958.0,444.4 961.0,444.4 962.8,472.8 965.8,472.8 967.9,381.1 970.9,381.1 972.3,472.8 975.3,472.8 977.1,424.6 980.1,424.6 981.0,480.0 984.0,480.0 985.8,249.3 988.8,249.3 990.6,480.0 993.6,480.0 994.9,321.3 997.9,321.3 1000.1,470.9 1003.1,470.9 1004.9,372.0 1007.9,372.0 1009.6,470.9 1012.6,470.9 1013.6,377.9 1016.6,377.9 1018.4,470.9 1021.4,470.9 1023.5,389.0 1026.5,389.0 1028.3,470.9 1031.3,470.9 1032.7,409.5 1035.7,409.5 1037.4,468.9 1040.4,468.9 1042.2,395.7 1045.2,395.7 1046.9,470.1 1049.9,470.1 1051.3,360.9 1054.3,360.9 1056.1,470.1 1059.1,470.1 1060.4,339.5 1063.4,339.5 1065.2,466.9 1068.2,466.9 1070.0,355.3 1073.0,355.3 1074.3,466.9 1077.3,466.9 1079.1,367.2 1082.1,367.2 1083.9,467.7 1086.9,467.7 1088.6,387.8 1091.6,387.8 1093.0,465.7 1096.0,465.7 1097.8,377.9 1100.8,377.9 1102.1,464.9 1105.1,464.9 1106.9,379.9 1109.9,379.9 1111.7,467.7 1114.7,467.7 1116.0,370.0 1119.0,370.0 1120.8,466.1 1123.8,466.1 1125.6,382.6 1128.6,382.6 1129.9,466.1 1132.9,466.1 1134.7,360.9 1137.7,360.9 1139.5,463.7 1142.5,463.7 1143.8,383.0 1146.8,383.0 1148.6,463.7 1151.6,463.7 1153.8,398.9 1156.8,398.9 1158.8,469.7 1159.8,469.7" fill="none" stroke="#a51ec9" stroke-width="2" stroke-linejoin="miter" stroke-miterlimit="10"/><line x1="790" y1="480" x2="1159.8" y2="480" stroke="#9a1cc0" stroke-width="2"/><line x1="790.0" y1="480" x2="790.0" y2="485" stroke="#333" stroke-width="1"/><line x1="863.96" y1="480" x2="863.96" y2="485" stroke="#333" stroke-width="1"/><line x1="937.92" y1="480" x2="937.92" y2="485" stroke="#333" stroke-width="1"/><line x1="1011.88" y1="480" x2="1011.88" y2="485" stroke="#333" stroke-width="1"/><line x1="1085.84" y1="480" x2="1085.84" y2="485" stroke="#333" stroke-width="1"/><line x1="1159.8" y1="480" x2="1159.8" y2="485" stroke="#333" stroke-width="1"/></svg>
<div style="position:absolute;left:763.5px;top:244.19px;font-size:11px;line-height:11px;font-weight:400;color:#121417;white-space:nowrap;transform:scaleX(0.8972);transform-origin:0 0;">25 %</div>
<div style="position:absolute;left:763.5px;top:290.29px;font-size:11px;line-height:11px;font-weight:400;color:#121417;white-space:nowrap;transform:scaleX(0.8972);transform-origin:0 0;">20 %</div>
<div style="position:absolute;left:763.5px;top:336.39px;font-size:11px;line-height:11px;font-weight:400;color:#121417;white-space:nowrap;transform:scaleX(0.8972);transform-origin:0 0;">15 %</div>
<div style="position:absolute;left:763.5px;top:382.49px;font-size:11px;line-height:11px;font-weight:400;color:#121417;white-space:nowrap;transform:scaleX(0.8972);transform-origin:0 0;">10 %</div>
<div style="position:absolute;left:769.0px;top:428.59px;font-size:11px;line-height:11px;font-weight:400;color:#121417;white-space:nowrap;transform:scaleX(0.8962);transform-origin:0 0;">5 %</div>
<div style="position:absolute;left:769.0px;top:474.69px;font-size:11px;line-height:11px;font-weight:400;color:#121417;white-space:nowrap;transform:scaleX(0.8962);transform-origin:0 0;">0 %</div>
<div style="position:absolute;left:770.0px;top:485.19px;font-size:11px;line-height:11px;font-weight:400;color:#121417;white-space:nowrap;transform:scaleX(0.9340);transform-origin:0 0;">17:43:39</div>
<div style="position:absolute;left:844.0px;top:485.19px;font-size:11px;line-height:11px;font-weight:400;color:#121417;white-space:nowrap;transform:scaleX(0.9340);transform-origin:0 0;">17:55:39</div>
<div style="position:absolute;left:917.9px;top:485.19px;font-size:11px;line-height:11px;font-weight:400;color:#121417;white-space:nowrap;transform:scaleX(0.9340);transform-origin:0 0;">18:07:39</div>
<div style="position:absolute;left:991.9px;top:485.19px;font-size:11px;line-height:11px;font-weight:400;color:#121417;white-space:nowrap;transform:scaleX(0.9340);transform-origin:0 0;">18:19:39</div>
<div style="position:absolute;left:1065.8px;top:485.19px;font-size:11px;line-height:11px;font-weight:400;color:#121417;white-space:nowrap;transform:scaleX(0.9340);transform-origin:0 0;">18:31:39</div>
<div style="position:absolute;left:1139.8px;top:485.19px;font-size:11px;line-height:11px;font-weight:400;color:#121417;white-space:nowrap;transform:scaleX(0.9340);transform-origin:0 0;">18:43:39</div>
<svg style="position:absolute;left:0;top:0" width="1909" height="809"><line x1="1486.5" y1="240" x2="1486.5" y2="437.5" stroke="#b9bec6" stroke-width="1.2"/><rect x="1487.5" y="240" width="363.0" height="197.5" fill="#5ccfcc"/><path d="M1487.1,385 L1487.6999999999998,412.3 L1492.3000000000002,412.3 L1492.9,385" fill="#98d7dc" stroke="#13bfa7" stroke-width="1.8"/><path d="M1501.1999999999998,385 L1501.7999999999997,406.5 L1505.4,406.5 L1506.0,385" fill="#98d7dc" stroke="#13bfa7" stroke-width="1.8"/><path d="M1518.5,385 L1519.1,416.4 L1523.7000000000003,416.4 L1524.3000000000002,385" fill="#98d7dc" stroke="#13bfa7" stroke-width="1.8"/><path d="M1533.0,385 L1533.6,402.3 L1537.2000000000003,402.3 L1537.8000000000002,385" fill="#98d7dc" stroke="#13bfa7" stroke-width="1.8"/><path d="M1549.8999999999999,385 L1550.4999999999998,412.3 L1555.1000000000001,412.3 L1555.7,385" fill="#98d7dc" stroke="#13bfa7" stroke-width="1.8"/><path d="M1564.5,385 L1565.1,406.5 L1568.7000000000003,406.5 L1569.3000000000002,385" fill="#98d7dc" stroke="#13bfa7" stroke-width="1.8"/><path d="M1582.0,385 L1582.6,416.4 L1587.2000000000003,416.4 L1587.8000000000002,385" fill="#98d7dc" stroke="#13bfa7" stroke-width="1.8"/><path d="M1595.8999999999999,385 L1596.4999999999998,402.3 L1600.1000000000001,402.3 L1600.7,385" fill="#98d7dc" stroke="#13bfa7" stroke-width="1.8"/><path d="M1613.8999999999999,385 L1614.4999999999998,412.3 L1619.1000000000001,412.3 L1619.7,385" fill="#98d7dc" stroke="#13bfa7" stroke-width="1.8"/><path d="M1628.0,385 L1628.6,406.5 L1632.2000000000003,406.5 L1632.8000000000002,385" fill="#98d7dc" stroke="#13bfa7" stroke-width="1.8"/><path d="M1645.8999999999999,385 L1646.4999999999998,416.4 L1651.1000000000001,416.4 L1651.7,385" fill="#98d7dc" stroke="#13bfa7" stroke-width="1.8"/><path d="M1660.1,385 L1660.6999999999998,402.3 L1664.3000000000002,402.3 L1664.9,385" fill="#98d7dc" stroke="#13bfa7" stroke-width="1.8"/><path d="M1676.6999999999998,385 L1677.2999999999997,412.3 L1681.9,412.3 L1682.5,385" fill="#98d7dc" stroke="#13bfa7" stroke-width="1.8"/><path d="M1691.5,385 L1692.1,406.5 L1695.7000000000003,406.5 L1696.3000000000002,385" fill="#98d7dc" stroke="#13bfa7" stroke-width="1.8"/><path d="M1709.6999999999998,385 L1710.2999999999997,416.4 L1714.9,416.4 L1715.5,385" fill="#98d7dc" stroke="#13bfa7" stroke-width="1.8"/><path d="M1723.3999999999999,385 L1723.9999999999998,401.2 L1727.6000000000001,401.2 L1728.2,385" fill="#98d7dc" stroke="#13bfa7" stroke-width="1.8"/><path d="M1740.6999999999998,385 L1741.2999999999997,411.2 L1745.9,411.2 L1746.5,385" fill="#98d7dc" stroke="#13bfa7" stroke-width="1.8"/><path d="M1755.1999999999998,385 L1755.7999999999997,405.4 L1759.4,405.4 L1760.0,385" fill="#98d7dc" stroke="#13bfa7" stroke-width="1.8"/><path d="M1773.1999999999998,385 L1773.7999999999997,415.4 L1778.4,415.4 L1779.0,385" fill="#98d7dc" stroke="#13bfa7" stroke-width="1.8"/><path d="M1786.6999999999998,385 L1787.2999999999997,401.2 L1790.9,401.2 L1791.5,385" fill="#98d7dc" stroke="#13bfa7" stroke-width="1.8"/><path d="M1804.6,385 L1805.1999999999998,411.2 L1809.8000000000002,411.2 L1810.4,385" fill="#98d7dc" stroke="#13bfa7" stroke-width="1.8"/><path d="M1818.8,385 L1819.3999999999999,405.4 L1823.0000000000002,405.4 L1823.6000000000001,385" fill="#98d7dc" stroke="#13bfa7" stroke-width="1.8"/><path d="M1837.1,385 L1837.6999999999998,414.3 L1842.3000000000002,414.3 L1842.9,385" fill="#98d7dc" stroke="#13bfa7" stroke-width="1.8"/><line x1="1487.5" y1="437.5" x2="1850.5" y2="437.5" stroke="#0fa9ae" stroke-width="2"/><line x1="1850.5" y1="240" x2="1850.5" y2="437.5" stroke="#16b5b0" stroke-width="1.5"/><line x1="1487.5" y1="437.5" x2="1487.5" y2="442.5" stroke="#333" stroke-width="1"/><line x1="1560.1" y1="437.5" x2="1560.1" y2="442.5" stroke="#333" stroke-width="1"/><line x1="1632.7" y1="437.5" x2="1632.7" y2="442.5" stroke="#333" stroke-width="1"/><line x1="1705.3" y1="437.5" x2="1705.3" y2="442.5" stroke="#333" stroke-width="1"/><line x1="1777.9" y1="437.5" x2="1777.9" y2="442.5" stroke="#333" stroke-width="1"/><line x1="1850.5" y1="437.5" x2="1850.5" y2="442.5" stroke="#333" stroke-width="1"/></svg>
<div style="position:absolute;left:1466.0px;top:432.69px;font-size:11px;line-height:11px;font-weight:400;color:#121417;white-space:nowrap;transform:scaleX(1.0293);transform-origin:0 0;">0 B</div>
<div style="position:absolute;left:1467.5px;top:443.69px;font-size:11px;line-height:11px;font-weight:400;color:#121417;white-space:nowrap;transform:scaleX(0.9340);transform-origin:0 0;">17:43:39</div>
<div style="position:absolute;left:1540.1px;top:443.69px;font-size:11px;line-height:11px;font-weight:400;color:#121417;white-space:nowrap;transform:scaleX(0.9340);transform-origin:0 0;">17:55:39</div>
<div style="position:absolute;left:1612.7px;top:443.69px;font-size:11px;line-height:11px;font-weight:400;color:#121417;white-space:nowrap;transform:scaleX(0.9340);transform-origin:0 0;">18:07:39</div>
<div style="position:absolute;left:1685.3px;top:443.69px;font-size:11px;line-height:11px;font-weight:400;color:#121417;white-space:nowrap;transform:scaleX(0.9340);transform-origin:0 0;">18:19:39</div>
<div style="position:absolute;left:1757.9px;top:443.69px;font-size:11px;line-height:11px;font-weight:400;color:#121417;white-space:nowrap;transform:scaleX(0.9340);transform-origin:0 0;">18:31:39</div>
<div style="position:absolute;left:1830.5px;top:443.69px;font-size:11px;line-height:11px;font-weight:400;color:#121417;white-space:nowrap;transform:scaleX(0.9340);transform-origin:0 0;">18:43:39</div>
<div style="position:absolute;left:1633px;top:464.5px;width:40px;height:3px;background:#d8dbe0;border-radius:2px"></div>
<div style="position:absolute;left:1426px;top:476.5px;width:22px;height:21.5px;background:#e3effa;border-radius:4px"></div>
<svg style="position:absolute;left:1426px;top:476.5px" width="22" height="22"><g fill="none" stroke="#2185e0" stroke-width="1.2"><rect x="7" y="7" width="10" height="10" rx="1.5"/><path d="M5 15V6.5A1.5 1.5 0 0 1 6.5 5H15"/><path d="M9.8 9.8L14.2 14.2M14.2 9.8L9.8 14.2"/></g></svg>
<div style="position:absolute;left:1458px;top:476.5px;width:22px;height:21.5px;background:#e9ebee;border-radius:4px"></div>
<svg style="position:absolute;left:1458px;top:476.5px" width="22" height="22"><g fill="none" stroke="#9aa0a8" stroke-width="1.2"><rect x="7" y="7" width="10" height="10" rx="1.5"/><path d="M5 15V6.5A1.5 1.5 0 0 1 6.5 5H15"/><path d="M9.5 12L11.5 14L14.5 10"/></g></svg>
<div style="position:absolute;left:1490px;top:477px;width:1px;height:21px;background:#dfe2e6"></div>
<div style="position:absolute;left:1501px;top:479px;width:108.5px;height:16px;box-sizing:border-box;border:1px solid #d5d9df;border-radius:4px;background:#fff"></div>
<div style="position:absolute;left:1508px;top:483px;width:8px;height:8px;border-radius:50%;background:#12c2a3"></div>
<div style="position:absolute;left:1524.0px;top:482.54px;font-size:10px;line-height:10px;font-weight:700;color:#121417;white-space:nowrap;transform:scaleX(0.9193);transform-origin:0 0;">ИСПОЛЬЗОВАНО</div>
<div style="position:absolute;left:1620px;top:479px;width:58px;height:16px;box-sizing:border-box;border:1px solid #d5d9df;border-radius:4px;background:#fff"></div>
<div style="position:absolute;left:1627px;top:483px;width:8px;height:8px;border-radius:50%;background:#14a7c9"></div>
<div style="position:absolute;left:1643.0px;top:482.54px;font-size:10px;line-height:10px;font-weight:700;color:#121417;white-space:nowrap;transform:scaleX(0.8220);transform-origin:0 0;">ВСЕГО</div>
<svg style="position:absolute;left:0;top:0" width="1909" height="809"><line x1="984.5" y1="570" x2="984.5" y2="809" stroke="#b9bec6" stroke-width="1.2"/><rect x="989" y="570" width="860" height="239" fill="#7dbba5" stroke="#1aa3a0" stroke-width="1.5"/><line x1="989" y1="570" x2="1849" y2="570" stroke="#1d87a6" stroke-width="2"/><line x1="989" y1="582.9" x2="1849" y2="582.9" stroke="#5f9f8b" stroke-width="1"/><line x1="981" y1="582.9" x2="985" y2="582.9" stroke="#555" stroke-width="1"/><line x1="989" y1="650.9" x2="1849" y2="650.9" stroke="#5f9f8b" stroke-width="1"/><line x1="981" y1="650.9" x2="985" y2="650.9" stroke="#555" stroke-width="1"/><line x1="989" y1="718.9" x2="1849" y2="718.9" stroke="#5f9f8b" stroke-width="1"/><line x1="981" y1="718.9" x2="985" y2="718.9" stroke="#555" stroke-width="1"/><line x1="989" y1="785.7" x2="1849" y2="785.7" stroke="#5f9f8b" stroke-width="1"/><line x1="981" y1="785.7" x2="985" y2="785.7" stroke="#555" stroke-width="1"/></svg>
<div style="position:absolute;left:940.0px;top:577.59px;font-size:11px;line-height:11px;font-weight:400;color:#121417;white-space:nowrap;transform:scaleX(0.9343);transform-origin:0 0;">18.6 GiB</div>
<div style="position:absolute;left:940.0px;top:645.59px;font-size:11px;line-height:11px;font-weight:400;color:#121417;white-space:nowrap;transform:scaleX(0.9343);transform-origin:0 0;">14.0 GiB</div>
<div style="position:absolute;left:940.0px;top:713.59px;font-size:11px;line-height:11px;font-weight:400;color:#121417;white-space:nowrap;transform:scaleX(0.9343);transform-origin:0 0;">9.31 GiB</div>
<div style="position:absolute;left:940.0px;top:780.39px;font-size:11px;line-height:11px;font-weight:400;color:#121417;white-space:nowrap;transform:scaleX(0.9343);transform-origin:0 0;">4.66 GiB</div>
<div style="position:absolute;left:1258.5px;top:57px;width:644px;height:336px;background:#fff;border-radius:3px;box-shadow:0 6px 14px rgba(0,0,0,0.11),0 0 0 1px rgba(0,0,0,0.035)"></div>
<div style="position:absolute;left:1689.3px;top:53.3px;width:6px;height:6px;background:#fff;transform:rotate(45deg);box-shadow:-1px -1px 0 rgba(0,0,0,0.035)"></div>
<div style="position:absolute;left:1684px;top:57.5px;width:17px;height:8px;background:#fff"></div>
<div style="position:absolute;left:1274.5px;top:83px;width:600px;height:199px;box-sizing:border-box;border:1px solid #dadde2;border-radius:4px"></div>
<div style="position:absolute;left:1296px;top:69px;width:189px;height:30px;background:#fff"></div>
<div style="position:absolute;left:1298px;top:69px;width:184.5px;height:29px;box-sizing:border-box;border:1px solid #d5d9df;border-radius:4px;background:#fff"></div>
<div style="position:absolute;left:1309.0px;top:78.84px;font-size:12px;line-height:12px;font-weight:400;color:#121417;white-space:nowrap;transform:scaleX(0.8295);transform-origin:0 0;">FESB</div>
<svg style="position:absolute;left:1464px;top:78px" width="8" height="12"><path d="M1.5 4L4 1.5L6.5 4M1.5 8L4 10.5L6.5 8" fill="none" stroke="#6b7280" stroke-width="1"/></svg>
<div style="position:absolute;left:1858px;top:71px;width:30px;height:28px;background:#fff"></div>
<div style="position:absolute;left:1860px;top:71px;width:27px;height:27px;background:#fdecec;border-radius:4px"></div>
<svg style="position:absolute;left:1865.5px;top:75.5px" width="16" height="18" viewBox="0 0 16 18"><g fill="none" stroke="#f44a50" stroke-width="1.5" stroke-linecap="round"><path d="M1.4 5H14.6"/><path d="M5.2 4.8V2.4A0.8 0.8 0 0 1 6 1.6H10.2A0.8 0.8 0 0 1 11 2.4V4.8"/><path d="M2.7 5.2L3.3 14.8A1.2 1.2 0 0 0 4.5 16H11.7A1.2 1.2 0 0 0 12.9 14.8L13.5 5.2"/><path d="M6.4 7.6V13.2M9.6 7.6V13.2"/></g></svg>
<div style="position:absolute;left:1296px;top:123px;width:558px;height:139px;box-sizing:border-box;border:1px solid #dadde2;border-radius:4px"></div>
<div style="position:absolute;left:1316px;top:109px;width:110px;height:30px;background:#fff"></div>
<div style="position:absolute;left:1319px;top:109.5px;width:64.5px;height:29px;box-sizing:border-box;border:1px solid #d5d9df;border-radius:4px;background:#fff"></div>
<div style="position:absolute;left:1329.0px;top:118.50px;font-size:13px;line-height:13px;font-weight:400;color:#121417;white-space:nowrap;transform:scaleX(0.9632);transform-origin:0 0;">И</div>
<svg style="position:absolute;left:1365px;top:118px" width="8" height="12"><path d="M1.5 4L4 1.5L6.5 4M1.5 8L4 10.5L6.5 8" fill="none" stroke="#6b7280" stroke-width="1"/></svg>
<div style="position:absolute;left:1396px;top:110px;width:28px;height:28px;background:#fdecec;border-radius:4px"></div>
<svg style="position:absolute;left:1402px;top:115px" width="16" height="18" viewBox="0 0 16 18"><g fill="none" stroke="#f44a50" stroke-width="1.5" stroke-linecap="round"><path d="M1.4 5H14.6"/><path d="M5.2 4.8V2.4A0.8 0.8 0 0 1 6 1.6H10.2A0.8 0.8 0 0 1 11 2.4V4.8"/><path d="M2.7 5.2L3.3 14.8A1.2 1.2 0 0 0 4.5 16H11.7A1.2 1.2 0 0 0 12.9 14.8L13.5 5.2"/><path d="M6.4 7.6V13.2M9.6 7.6V13.2"/></g></svg>
<div style="position:absolute;left:1317px;top:149px;width:32px;height:29.5px;background:#e3effa;border-radius:4px"></div>
<div style="position:absolute;left:1326.0px;top:159.53px;font-size:10px;line-height:10px;font-weight:700;color:#2185e0;white-space:nowrap;transform:scaleX(1.1000);transform-origin:0 0;">CI</div>
<div style="position:absolute;left:1361px;top:149.5px;width:199.5px;height:29px;box-sizing:border-box;border:1px solid #d5d9df;border-radius:4px;background:#fff"></div>
<div style="position:absolute;left:1371.0px;top:158.00px;font-size:13px;line-height:13px;font-weight:400;color:#121417;white-space:nowrap;transform:scaleX(0.9092);transform-origin:0 0;">Содержится</div>
<svg style="position:absolute;left:1522px;top:158px" width="12" height="12"><path d="M2 2L10 10M10 2L2 10" stroke="#4b5058" stroke-width="1.2"/></svg>
<svg style="position:absolute;left:1541px;top:158px" width="8" height="12"><path d="M1.5 4L4 1.5L6.5 4M1.5 8L4 10.5L6.5 8" fill="none" stroke="#6b7280" stroke-width="1"/></svg>
<div style="position:absolute;left:1573px;top:149.5px;width:219.5px;height:53px;box-sizing:border-box;border:1px solid #d5d9df;border-radius:4px;background:#fff"></div>
<div style="position:absolute;left:1584px;top:154px;width:180px;height:17.5px;background:#eef0f2;border-radius:9px"></div>
<div style="position:absolute;left:1592.0px;top:157.19px;font-size:11px;line-height:11px;font-weight:400;color:#121417;white-space:nowrap;transform:scaleX(0.8760);transform-origin:0 0;">192.168.162.51:9696 (fesb-pamir...</div>
<svg style="position:absolute;left:1746px;top:157px" width="12" height="12"><path d="M3 3L9 9M9 3L3 9" stroke="#1f2328" stroke-width="1.3"/></svg>
<svg style="position:absolute;left:1749px;top:169px" width="12" height="12"><path d="M2 2L10 10M10 2L2 10" stroke="#4b5058" stroke-width="1.2"/></svg>
<svg style="position:absolute;left:1771px;top:169px" width="8" height="12"><path d="M1.5 4L4 1.5L6.5 4M1.5 8L4 10.5L6.5 8" fill="none" stroke="#6b7280" stroke-width="1"/></svg>
<div style="position:absolute;left:1584.0px;top:182.84px;font-size:12px;line-height:12px;font-weight:400;color:#a7adb5;white-space:nowrap;transform:scaleX(0.9810);transform-origin:0 0;">Выберите значения</div>
<div style="position:absolute;left:1805px;top:149.5px;width:28px;height:27.5px;background:#fdecec;border-radius:4px"></div>
<svg style="position:absolute;left:1811px;top:154px" width="16" height="18" viewBox="0 0 16 18"><g fill="none" stroke="#f44a50" stroke-width="1.5" stroke-linecap="round"><path d="M1.4 5H14.6"/><path d="M5.2 4.8V2.4A0.8 0.8 0 0 1 6 1.6H10.2A0.8 0.8 0 0 1 11 2.4V4.8"/><path d="M2.7 5.2L3.3 14.8A1.2 1.2 0 0 0 4.5 16H11.7A1.2 1.2 0 0 0 12.9 14.8L13.5 5.2"/><path d="M6.4 7.6V13.2M9.6 7.6V13.2"/></g></svg>
<div style="position:absolute;left:1317px;top:213px;width:28px;height:27.5px;background:#e3effa;border-radius:4px"></div>
<svg style="position:absolute;left:1317px;top:213px" width="28" height="28"><path d="M14 8.5V19.5M8.5 14H19.5" stroke="#2185e0" stroke-width="1.6"/></svg>
<div style="position:absolute;left:1275px;top:299.5px;width:105.5px;height:29px;box-sizing:border-box;border:1px solid #d5d9df;border-radius:4px;background:#fff"></div>
<svg style="position:absolute;left:1284px;top:306px" width="16" height="16"><path d="M8 2V14M2 8H14" stroke="#1f2328" stroke-width="1.6"/></svg>
<div style="position:absolute;left:1311.5px;top:308.84px;font-size:12px;line-height:12px;font-weight:700;color:#121417;white-space:nowrap;transform:scaleX(0.9290);transform-origin:0 0;">Добавить</div>
<div style="position:absolute;left:1658px;top:345px;width:100px;height:36px;background:#f55152;border-radius:4px"></div>
<div style="position:absolute;left:1676.5px;top:356.15px;font-size:14px;line-height:14px;font-weight:700;color:#fff;white-space:nowrap;transform:scaleX(0.9353);transform-origin:0 0;">Сбросить</div>
<div style="position:absolute;left:1774px;top:345px;width:113px;height:36px;background:#e7e9ec;border-radius:4px"></div>
<div style="position:absolute;left:1792.5px;top:356.15px;font-size:14px;line-height:14px;font-weight:700;color:#a7adb5;white-space:nowrap;transform:scaleX(0.9629);transform-origin:0 0;">Применить</div>
</body></html>
